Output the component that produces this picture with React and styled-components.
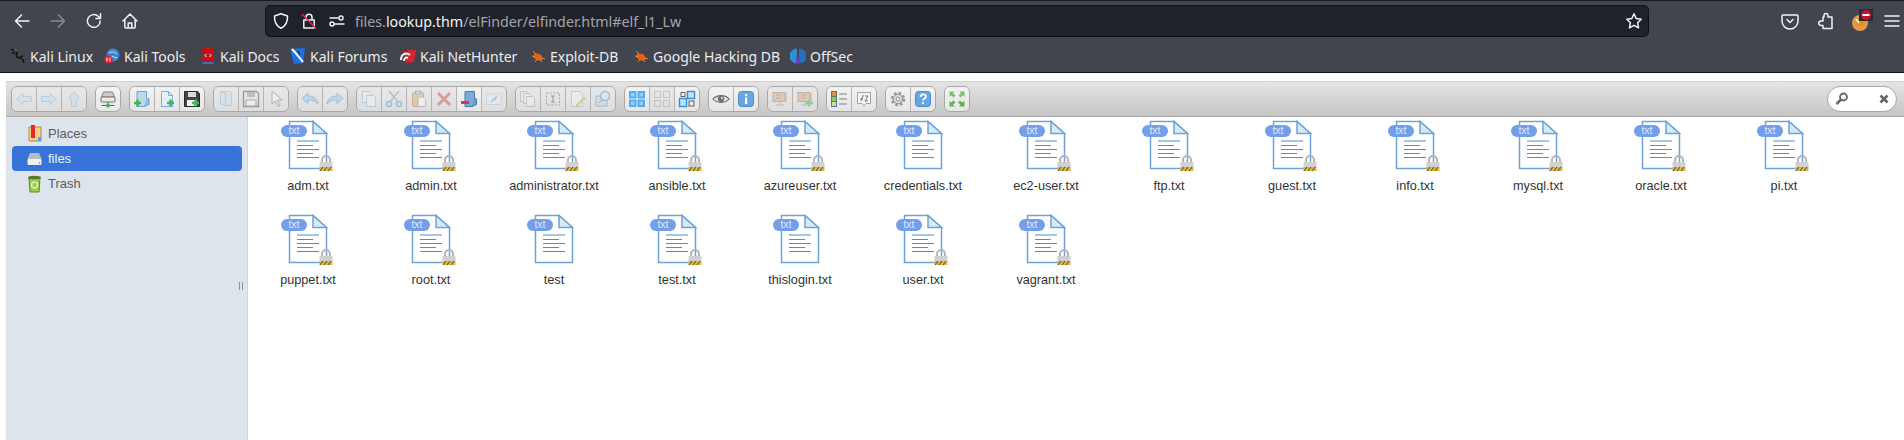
import React from "react";
import styled, { createGlobalStyle } from "styled-components";

const GlobalStyle = createGlobalStyle`
  html, body {
    margin: 0;
    padding: 0;
    background: #fff;
    overflow: hidden;
  }
`;

const Page = styled.div`
  width: 1904px;
  height: 440px;
  display: flex;
  flex-direction: column;
  overflow: hidden;
`;

/* browser chrome */
const Chrome = styled.div`
  background: #42454e;
  border-top: 1px solid #1b1c20;
  border-bottom: 1px solid #121316;
  height: 71px;
  flex: none;
  font-family: "Noto Sans", sans-serif;
`;

const NavRow = styled.div`
  height: 40px;
  display: flex;
  align-items: center;
  padding-left: 4px;
`;

const NavButton = styled.div`
  width: ${(p) => p.$w || 36}px;
  height: 32px;
  flex: none;
  display: flex;
  align-items: center;
  justify-content: center;
  position: relative;
  opacity: ${(p) => (p.$off ? 0.4 : 1)};
`;

const UrlBar = styled.div`
  width: 1384px;
  height: 32px;
  margin-left: 117px;
  box-sizing: border-box;
  flex: none;
  display: flex;
  align-items: center;
  background: #20222b;
  border: 1px solid #101115;
  border-radius: 5px;
  padding-left: 1px;
`;

const UrlIcon = styled.div`
  width: 28px;
  height: 20px;
  flex: none;
  display: flex;
  align-items: center;
  justify-content: center;
`;

const UrlText = styled.div`
  margin-left: 4px;
  font-size: 14.25px;
  color: #a2a4aa;
  white-space: nowrap;
  flex: 1;
  b {
    font-weight: 400;
    color: #f4f4f6;
  }
`;

const RightTools = styled.div`
  margin-left: auto;
  display: flex;
  align-items: center;
`;

const Bookmarks = styled.div`
  height: 30px;
  display: flex;
  align-items: center;
  padding-left: 10px;
`;

const Bookmark = styled.div`
  width: ${(p) => p.$w}px;
  flex: none;
  display: flex;
  align-items: center;
  gap: 4px;
  color: #eceded;
  font-size: 14px;
  white-space: nowrap;
`;

/* elfinder */
const Finder = styled.div`
  flex: 1;
  margin: 8px 0 0 6px;
  display: flex;
  flex-direction: column;
  min-height: 0;
  font-family: "Liberation Sans", Arial, sans-serif;
`;

const Toolbar = styled.div`
  height: 36px;
  flex: none;
  box-sizing: border-box;
  display: flex;
  align-items: center;
  padding: 0 7px 0 5px;
  gap: 8px;
  background: linear-gradient(#e4e4e4, #c5c5c5);
  border-top: 1px solid #d0d0d0;
  border-bottom: 1px solid #a9a9a9;
`;

const Group = styled.div`
  display: flex;
  height: 26px;
  box-sizing: border-box;
  border: 1px solid #a8a8a8;
  border-radius: 6px;
  overflow: hidden;
  flex: none;
`;

const Tool = styled.div`
  width: 25px;
  box-sizing: border-box;
  display: flex;
  align-items: center;
  justify-content: center;
  background: ${(p) => (p.$on ? "linear-gradient(#f3f3f3, #e6e6e6)" : "linear-gradient(#e8e8e8, #dedede)")};
  &:first-child {
    width: 24px;
  }
  & + & {
    border-left: 1px solid #b4b4b4;
  }
  svg {
    opacity: ${(p) => (p.$on ? 0.9 : 0.42)};
  }
`;

const Search = styled.div`
  margin-left: auto;
  width: 70px;
  height: 26px;
  box-sizing: border-box;
  border: 1px solid #a8a8a8;
  border-radius: 13px;
  background: #fff;
  display: flex;
  align-items: center;
  justify-content: space-between;
  padding: 0 7px;
  flex: none;
`;

const Body = styled.div`
  flex: 1;
  display: flex;
  min-height: 0;
`;

const Sidebar = styled.div`
  width: 242px;
  flex: none;
  box-sizing: border-box;
  background: #dde4eb;
  border-right: 1px solid #cfd5dc;
  padding: 4px 5px 0 6px;
  position: relative;
`;

const TreeRow = styled.div`
  height: 25px;
  display: flex;
  align-items: center;
  padding-left: 16px;
  gap: 6px;
  border-radius: 4px;
  font-size: 13px;
  color: ${(p) => (p.$selected ? "#eef3fb" : "#5a5d61")};
  background: ${(p) => (p.$selected ? "#3873d9" : "transparent")};
`;

const Handle = styled.div`
  position: absolute;
  right: 4px;
  top: 165px;
  width: 2px;
  height: 8px;
  border-left: 1px solid #8d9298;
  border-right: 1px solid #8d9298;
`;

const Files = styled.div`
  flex: 1;
  display: grid;
  grid-template-columns: repeat(13, 120px);
  grid-auto-rows: 94px;
  column-gap: 3px;
  padding-top: 3px;
  align-content: start;
  background: #fff;
`;

const FileCell = styled.div`
  display: flex;
  flex-direction: column;
  align-items: center;
`;

const FileIconWrap = styled.div`
  width: 52px;
  height: 52px;
  position: relative;
`;

const TypeBadge = styled.span`
  position: absolute;
  left: -1px;
  top: 5px;
  width: 26px;
  height: 12px;
  border-radius: 6px;
  background: #739eea;
  color: #dfe9fb;
  font-size: 10.5px;
  line-height: 11px;
  text-align: center;
`;

const FileName = styled.div`
  margin-top: 7px;
  font-size: 12.7px;
  line-height: 15px;
  color: #333;
  white-space: nowrap;
`;

const LockSlot = styled.span`
  position: absolute;
  right: 1px;
  bottom: 0;
  display: flex;
`;

/* ---- drawings ---- */
const Svg = ({ s = 18, v = 18, children, ...rest }) => (
  <svg width={s} height={s} viewBox={`0 0 ${v} ${v}`} fill="none" {...rest}>
    {children}
  </svg>
);

const chromeLine = { stroke: "#f2f2f4", strokeWidth: 1.5, strokeLinecap: "round", strokeLinejoin: "round" };

const ChromeIcon = ({ name }) => {
  switch (name) {
    case "back":
      return <Svg><path d="M16 9H2.5M8.5 3 2.5 9l6 6" {...chromeLine} /></Svg>;
    case "forward":
      return <Svg><path d="M2 9h13.5M9.5 3l6 6-6 6" {...chromeLine} /></Svg>;
    case "reload":
      return <Svg><path d="M15.2 8.9a6.4 6.4 0 1 1-2-4.6l2.3 2M15.5 1.8v4.7h-4.6" {...chromeLine} /></Svg>;
    case "home":
      return <Svg><path d="M2 9 9 2l7 7M3.8 7.5V15a1 1 0 0 0 1 1h8.4a1 1 0 0 0 1-1V7.5M7.2 16v-5h3.6v5" {...chromeLine} /></Svg>;
    case "shield":
      return <Svg><path d="M9 1.8 15.5 4c.3 6-1.8 10-6.5 12.2C4.3 14 2.2 10 2.5 4z" {...chromeLine} /></Svg>;
    case "lock":
      return (
        <Svg>
          <path d="M6 7.5V5.200a3 3 0 0 1 6 0V7.5M3.800 8h10.400v8H3.800z" {...chromeLine} />
          <path d="M2 2l14 14.5" stroke="#e0244a" strokeWidth="1.5" />
        </Svg>
      );
    case "perm":
      return (
        <Svg>
          <path d="M2 6h8M7 12h9" {...chromeLine} />
          <circle cx="13" cy="6" r="2" {...chromeLine} />
          <circle cx="4" cy="12" r="2" {...chromeLine} />
        </Svg>
      );
    case "star":
      return <Svg><path d="M9 1.8l2.200 4.700 5 .7-3.600 3.500.9 5.100L9 13.300l-4.500 2.500.9-5.100L1.800 7.200l5-.7z" {...chromeLine} /></Svg>;
    case "pocket":
      return <Svg><path d="M2 3h14a1 1 0 0 1 1 1v5a8 8 0 0 1-16 0V4a1 1 0 0 1 1-1zM6 7.5l3 3 3-3" {...chromeLine} /></Svg>;
    case "puzzle":
      return <Svg><path d="M7 5V3.500a2 2 0 0 1 4 0V5h4v11.500H6v-3H4a2.200 2.200 0 0 1 0-4.500h2V5z" {...chromeLine} /></Svg>;
    case "menu":
      return <Svg><path d="M2 4h14M2 9h14M2 14h14" {...chromeLine} /></Svg>;
    default:
      return null;
  }
};

const Avatar = () => (
  <svg width="24" height="24" viewBox="0 0 24 24">
    <circle cx="10" cy="14" r="8" fill="#e09a50" />
    <path d="M5 13l5-3 6 3-4 4-5-1z" fill="#f08a1d" />
    <path d="M6 10l3 4" stroke="#fff" strokeWidth="1.5" />
    <rect x="9" y="0" width="14" height="12" fill="#2c2d31" />
    <circle cx="16" cy="6" r="5" fill="#c8102e" />
    <rect x="12.5" y="5" width="7" height="2" fill="#fff" />
  </svg>
);

const BookmarkIcon = ({ name }) => {
  switch (name) {
    case "linux":
      return (
        <Svg s={16} v={16}>
          <path d="M1 2c3-1 5 0 6 2 1 3-2 3 0 5 2 1 5 1 6 3l1 3M2 5c2-.5 3 0 3.5 1M10 9l3-1" stroke="#101114" strokeWidth="1.5" />
          <path d="M4 1l3 2" stroke="#d8d8d8" strokeWidth=".6" />
        </Svg>
      );
    case "tools":
      return (
        <Svg s={16} v={16}>
          <circle cx="9" cy="7" r="6.5" fill="#3d86d8" />
          <path d="M5 5c3-2 6-1 8 1M5 9c3-1 5 0 8 1" stroke="#cfe4fa" strokeWidth="1" />
          <circle cx="4.5" cy="11.5" r="4.200" fill="#d9232d" />
          <path d="M3 9.5v4M6 9.5v4" stroke="#fff" strokeWidth="1" />
        </Svg>
      );
    case "docs":
      return (
        <Svg s={16} v={16}>
          <rect x="2.5" y="0" width="11" height="15" rx="1" fill="#c90f16" />
          <rect x="2.5" y="14" width="11" height="2" fill="#3d6fb4" />
          <path d="M6.5 6 5 7.5 6.5 9M9.5 6 11 7.5 9.5 9" stroke="#fff" strokeWidth="1" />
        </Svg>
      );
    case "forums":
      return (
        <Svg s={16} v={16}>
          <path d="M0 1l15-1-2 15-9 1z" fill="#1f6fe0" />
          <path d="M2 1c3 3 6 7 11 13" stroke="#fff" strokeWidth="2" />
          <path d="M8 3l2 4" stroke="#1a1a1a" strokeWidth="1" />
        </Svg>
      );
    case "hunter":
      return (
        <Svg s={16} v={16}>
          <path d="M4 2l12 0-2 12-8 1z" fill="#d7262e" />
          <path d="M1 12c0-6 5-8 9-5M4 13c0-3 2-4 4-3" stroke="#f4f4f4" strokeWidth="2" />
          <path d="M5 1l2 3" stroke="#222" strokeWidth="1" />
        </Svg>
      );
    case "exploit":
      return (
        <Svg s={16} v={16}>
          <ellipse cx="8" cy="9" rx="5" ry="3.2" fill="#e6601a" transform="rotate(25 8 9)" />
          <path d="M3 3l3 3M2 8l3 1M5 14l2-3M12 14l-2-3M15 11l-3-1" stroke="#e98a3c" strokeWidth="1" />
        </Svg>
      );
    case "offsec":
      return (
        <Svg s={16} v={16}>
          <path d="M7 .5a7.5 7.5 0 0 0 0 15z" fill="#2b8fd6" />
          <path d="M9 .5a7.5 7.5 0 0 1 0 15z" fill="#2a6fc2" />
          <path d="M7 9v6.5M9 9v6.5" stroke="#6b3bc7" strokeWidth="2" />
        </Svg>
      );
    default:
      return null;
  }
};

const blue = "#7fb2dc";
const blueFill = "#c4dcef";
const plus = (x, y) => (
  <path d={`M${x} ${y - 3.5}v7M${x - 3.5} ${y}h7`} stroke="#2fae47" strokeWidth="2.5" />
);

const ToolIcon = ({ name }) => {
  switch (name) {
    case "back":
      return <Svg><path d="M1.5 9 8 3.5V6.500h8.500v5H8v3z" fill={blueFill} stroke={blue} /></Svg>;
    case "forward":
      return <Svg><path d="M16.5 9 10 3.5V6.500H1.500v5H10v3z" fill={blueFill} stroke={blue} /></Svg>;
    case "up":
      return <Svg><path d="M9 1.5 14.5 8h-3v8.500h-5V8h-3z" fill={blueFill} stroke={blue} /></Svg>;
    case "netmount":
      return (
        <Svg>
          <path d="M4.5 2h9l2 5h-13z" fill="#c8c8c8" stroke="#777" />
          <rect x="2" y="7" width="14" height="5" rx="1" fill="#e8e8e8" stroke="#666" />
          <path d="M9 12v3M2.5 15.5h13" stroke="#555" />
          <circle cx="9" cy="15.5" r="2" fill="#2fae47" />
        </Svg>
      );
    case "mkdir":
      return (
        <Svg>
          <path d="M4 1.5h9.500v13l-2.500 2H4z" fill="#b9d5ec" stroke="#5a9bd0" />
          <path d="M13.5 8l2.500 1v5.500l-5 2" fill="#8fbbe0" stroke="#5a9bd0" />
          {plus(4.5, 13)}
        </Svg>
      );
    case "mkfile":
      return (
        <Svg>
          <path d="M3.5 1.5h7l4 4v11h-11z" fill="#e4f0fa" stroke="#6ba7d8" />
          <path d="M10.5 1.5v4h4" stroke="#6ba7d8" />
          {plus(12.5, 13)}
        </Svg>
      );
    case "upload":
      return (
        <Svg>
          <path d="M1.5 1.5h13l2 2v13h-15z" fill="#333" stroke="#111" />
          <rect x="5" y="2" width="8" height="5" fill="#d8d8d8" />
          <rect x="4" y="10" width="10" height="6" fill="#f2f2f2" />
          {plus(12.5, 13)}
        </Svg>
      );
    case "open":
      return (
        <Svg>
          <path d="M3.5 1.5h9l2 1v13h-6l-5-1.500z" fill={blueFill} stroke={blue} />
          <path d="M8.5 3v12.500M3.500 1.500l5 1.500" stroke={blue} />
        </Svg>
      );
    case "save":
      return (
        <Svg>
          <path d="M1.5 1.5h13l2 2v13h-15z" fill="#e8e8e8" stroke="#333" strokeWidth="1.3" />
          <rect x="5" y="2" width="8" height="5" fill="#888" />
          <rect x="4" y="10" width="10" height="6" fill="#fff" stroke="#555" />
        </Svg>
      );
    case "cursor":
      return <Svg><path d="M5 1v13l3.500-3 2.500 5.500 2-1L10.500 10H15z" fill="#fff" stroke="#666" /></Svg>;
    case "undo":
      return <Svg><path d="M1 8.5 7 3v3c5 0 9 2 10 8-2-3-5-4-10-4v3.500z" fill="#8fc0e8" stroke="#3c8ccc" /></Svg>;
    case "redo":
      return <Svg><path d="M17 8.5 11 3v3C6 6 2 8 1 14c2-3 5-4 10-4v3.500z" fill="#8fc0e8" stroke="#3c8ccc" /></Svg>;
    case "copy":
      return (
        <Svg>
          <path d="M2.5 1.5h7l2 2v9h-9z" fill="#eef5fb" stroke="#88a8c4" />
          <path d="M6.5 5.5h7l2 2v9h-9z" fill="#eef5fb" stroke="#88a8c4" />
        </Svg>
      );
    case "cut":
      return (
        <Svg>
          <path d="M4 1l9 11M14 1 5 12" stroke="#7d8d99" strokeWidth="1.5" />
          <circle cx="4" cy="14" r="2.5" stroke="#3d8fd0" strokeWidth="1.6" />
          <circle cx="14" cy="14" r="2.5" stroke="#3d8fd0" strokeWidth="1.6" />
        </Svg>
      );
    case "paste":
      return (
        <Svg>
          <rect x="2.5" y="2.5" width="11" height="14" rx="1" fill="#d9a766" stroke="#9c6b33" />
          <rect x="5.5" y="1" width="5" height="3" fill="#bbb" stroke="#777" />
          <path d="M8 7h5l2.500 2.500v7H8z" fill="#fff" stroke="#888" />
        </Svg>
      );
    case "rm":
      return <Svg><path d="M3 3l12 12M15 3 3 15" stroke="#cc3a2a" strokeWidth="3" /></Svg>;
    case "empty":
      return (
        <Svg>
          <path d="M5 1.5h9.500v13l-2.500 2H5z" fill="#6fa6d6" stroke="#356fa8" />
          <path d="M14.5 8l2 1v5.500l-4.500 2" fill="#5b93c6" stroke="#356fa8" />
          <rect x="1" y="11" width="8" height="3" fill="#d8262c" />
        </Svg>
      );
    case "hide":
      return (
        <Svg>
          <rect x="1.5" y="3.5" width="15" height="11" fill="#e6f0f9" stroke="#a8c6e0" />
          <path d="M1.5 3.5h15v2h-15z" fill="#cfe1f0" />
          <path d="M6 12l6-6M9 8l2 2" stroke="#5a9bd0" strokeWidth="1.5" />
        </Svg>
      );
    case "duplicate":
      return (
        <Svg>
          <path d="M1.5 1.5h6l2 2v8h-8z" fill="#eef4fa" stroke="#8a9aa8" />
          <path d="M4.5 3.5h6l2 2v8h-8z" fill="#eef4fa" stroke="#8a9aa8" />
          <path d="M7.5 6.5h6l2 2v8h-8z" fill="#eef4fa" stroke="#8a9aa8" />
        </Svg>
      );
    case "rename":
      return (
        <Svg>
          <rect x="2.5" y="3" width="13" height="12" stroke="#555" strokeDasharray="2 1.5" />
          <path d="M7 6h4M7 12h4M9 6v6" stroke="#333" />
        </Svg>
      );
    case "edit":
      return (
        <Svg>
          <path d="M2.5 1.5h8l3 3v12h-11z" fill="#f4f6f8" stroke="#9aa6b0" />
          <path d="M7 15l8-8 1.500 1.500-8 8z" fill="#e8b83a" stroke="#a07a20" strokeWidth=".6" />
        </Svg>
      );
    case "resize":
      return (
        <Svg>
          <rect x="2" y="6" width="11" height="10" fill="#bcd5ea" stroke="#4a86ba" />
          <circle cx="11" cy="6" r="4.5" fill="#d4e6f4" stroke="#3a8bc8" strokeWidth="1.5" />
          <path d="M5 13l4-4" stroke="#35628c" />
        </Svg>
      );
    case "grid":
      return (
        <Svg>
          <rect x="1" y="1" width="7.5" height="7.5" fill="#42a5f5" />
          <rect x="9.5" y="1" width="7.5" height="7.5" fill="#42a5f5" />
          <rect x="1" y="9.5" width="7.5" height="7.5" fill="#42a5f5" />
          <rect x="9.5" y="9.5" width="7.5" height="7.5" fill="#42a5f5" />
          <rect x="3" y="3" width="3.5" height="3.5" fill="#8fcbf8" />
          <rect x="11.5" y="3" width="3.5" height="3.5" fill="#8fcbf8" />
          <rect x="3" y="11.5" width="3.5" height="3.5" fill="#8fcbf8" />
          <rect x="11.5" y="11.5" width="3.5" height="3.5" fill="#8fcbf8" />
        </Svg>
      );
    case "selnone":
      return (
        <Svg>
          <rect x="1.5" y="1.5" width="6" height="6" stroke="#999" />
          <rect x="10.5" y="1.5" width="6" height="6" stroke="#999" />
          <rect x="1.5" y="10.5" width="6" height="6" stroke="#999" />
          <rect x="10.5" y="10.5" width="6" height="6" stroke="#999" />
        </Svg>
      );
    case "selinvert":
      return (
        <Svg>
          <rect x="1.5" y="8.5" width="7" height="8" fill="#bfe0fa" stroke="#1f84d8" strokeWidth="1.4" />
          <rect x="9.5" y="1.5" width="7" height="7" fill="#bfe0fa" stroke="#1f84d8" strokeWidth="1.4" />
          <rect x="3" y="2.5" width="4" height="4" stroke="#555" />
          <rect x="11" y="11" width="5" height="5" stroke="#555" />
        </Svg>
      );
    case "eye":
      return (
        <Svg s={18} v={20}>
          <path d="M1 10c4-5 14-5 18 0-4 5-14 5-18 0z" fill="#ddd" stroke="#555" strokeWidth="1.2" />
          <circle cx="10" cy="10" r="3.5" fill="#666" />
          <circle cx="11" cy="9" r="1.2" fill="#ddd" />
        </Svg>
      );
    case "info":
      return (
        <Svg>
          <rect x="1.5" y="1.5" width="15" height="15" rx="3" fill="#5a9fe0" stroke="#3d7fc0" />
          <rect x="8" y="4" width="2.2" height="2.2" fill="#fff" />
          <rect x="8" y="7.5" width="2.2" height="6.5" fill="#fff" />
        </Svg>
      );
    case "extract":
    case "archive":
      return (
        <Svg>
          <rect x="2" y="2.5" width="12" height="9" fill="#d6a878" stroke="#8a6a46" />
          <path d="M5 5h5M5 8h5M15 3v8" stroke="#8a6a46" />
          <path d="M5 15h8M9 11.5v3.5" stroke="#888" />
          {name === "archive" ? plus(13.5, 13) : null}
        </Svg>
      );
    case "list":
      return (
        <Svg>
          <rect x="1.5" y="1.5" width="5" height="5" fill="#d98a3c" stroke="#7a5a30" />
          <rect x="1.5" y="6.5" width="5" height="5" fill="#7cc36a" stroke="#3d7a40" />
          <rect x="1.5" y="11.5" width="5" height="5" fill="#e8d66a" stroke="#2f6fb5" />
          <path d="M9 4h8M9 9h8M9 14h8" stroke="#777" />
        </Svg>
      );
    case "sort":
      return (
        <Svg>
          <path d="M2.5 2.5h13v11H11l-2 2.500-2-2.500H2.500z" fill="#f8f8f8" stroke="#999" />
          <path d="M8.5 5 6 11M5 9h3M10 6h3l-3 5h3" stroke="#666" />
        </Svg>
      );
    case "prefs":
      return (
        <Svg>
          <circle cx="9" cy="9" r="6" fill="#dcdcdc" stroke="#8a8a8a" strokeWidth="2.4" strokeDasharray="2.5 2.2" />
          <circle cx="9" cy="9" r="4.6" stroke="#8a8a8a" />
          <circle cx="9" cy="9" r="2" fill="#f4f4f4" stroke="#888" />
        </Svg>
      );
    case "help":
      return (
        <Svg>
          <rect x="1.5" y="1.5" width="15" height="15" rx="3" fill="#5a9fe0" stroke="#3d7fc0" />
          <path d="M6.5 7c0-3.500 5.500-3.500 5.500-.5 0 2-3 2-3 4" stroke="#fff" strokeWidth="1.7" />
          <rect x="8" y="12" width="2" height="2" fill="#fff" />
        </Svg>
      );
    case "full":
      return (
        <Svg>
          <path d="M1.500 1.500h5L5 3.500l2.500 2-2 2L3.500 5.500l-2 1.500zM16.500 1.500v5.500l-2-1.500-2 2-2-2 2.500-2-1.500-2z" fill="#6dbb5a" />
          <path d="M1.500 16.500V11l2 1.500 2-2 2 2-2.500 2 1.500 2zM16.500 16.500h-5.500l1.500-2-2.500-2 2-2 2 2 2.500-1.500z" fill="#5aa84a" />
        </Svg>
      );
    default:
      return null;
  }
};

const LockIcon = () => (
  <svg width="14" height="17" viewBox="0 0 14 17">
    <path d="M3 8V5a4 4 0 0 1 8 0v3" fill="none" stroke="#b5b5b5" strokeWidth="2" />
    <rect x="0.5" y="7" width="13" height="6" fill="#d0d0d0" />
    <rect x="0.5" y="12" width="13" height="4" fill="#e5b93c" />
    <path d="M1 16l3-4M5 16l3-4M9 16l3-4" stroke="#5a5a4a" strokeWidth="1.1" />
  </svg>
);

const DocIcon = () => (
  <svg width="52" height="52" viewBox="1 0 52 52" fill="none">
    <path d="M8.500 1.500H32L45.500 13.500V48.500H8.500Z" fill="#fff" stroke="#6fa3d6" strokeWidth="1.5" />
    <path d="M32 1.500V13.500H45.500Z" fill="#d6ebf9" stroke="#6fa3d6" strokeWidth="1.5" />
    <path d="M16 21h22M16 25.500h16M16 29.500h22M16 33.500h16M16 37.500h22" stroke="#4d8ecb" strokeWidth="1.2" />
  </svg>
);

const FileItem = ({ name, locked = true }) => (
  <FileCell>
    <FileIconWrap>
      <DocIcon />
      <TypeBadge>txt</TypeBadge>
      {locked ? <LockSlot><LockIcon /></LockSlot> : null}
    </FileIconWrap>
    <FileName>{name}</FileName>
  </FileCell>
);

const toolGroups = [
  [["back"], ["forward"], ["up"]],
  [["netmount", 1]],
  [["mkdir", 1], ["mkfile", 1], ["upload", 1]],
  [["open"], ["save"], ["cursor"]],
  [["undo"], ["redo"]],
  [["copy"], ["cut"], ["paste"], ["rm"], ["empty", 1], ["hide"]],
  [["duplicate"], ["rename"], ["edit"], ["resize"]],
  [["grid", 1], ["selnone"], ["selinvert", 1]],
  [["eye", 1], ["info", 1]],
  [["extract"], ["archive"]],
  [["list", 1], ["sort", 1]],
  [["prefs", 1], ["help", 1]],
  [["full", 1]],
];

const bookmarks = [
  ["linux", "Kali Linux", 94],
  ["tools", "Kali Tools", 96],
  ["docs", "Kali Docs", 90],
  ["forums", "Kali Forums", 110],
  ["hunter", "Kali NetHunter", 130],
  ["exploit", "Exploit-DB", 103],
  ["exploit", "Google Hacking DB", 157],
  ["offsec", "OffSec", 70],
];

const files = [
  "adm.txt", "admin.txt", "administrator.txt", "ansible.txt", "azureuser.txt", "credentials.txt",
  "ec2-user.txt", "ftp.txt", "guest.txt", "info.txt", "mysql.txt", "oracle.txt", "pi.txt",
  "puppet.txt", "root.txt", "test", "test.txt", "thislogin.txt", "user.txt", "vagrant.txt",
];
const unlocked = ["credentials.txt", "test", "thislogin.txt"];

export default function App() {
  return (
    <Page>
      <GlobalStyle />
      <Chrome>
        <NavRow>
          <NavButton><ChromeIcon name="back" /></NavButton>
          <NavButton $off><ChromeIcon name="forward" /></NavButton>
          <NavButton><ChromeIcon name="reload" /></NavButton>
          <NavButton><ChromeIcon name="home" /></NavButton>
          <UrlBar>
            <UrlIcon><ChromeIcon name="shield" /></UrlIcon>
            <UrlIcon><ChromeIcon name="lock" /></UrlIcon>
            <UrlIcon><ChromeIcon name="perm" /></UrlIcon>
            <UrlText>files.<b>lookup.thm</b>/elFinder/elfinder.html#elf_l1_Lw</UrlText>
            <UrlIcon><ChromeIcon name="star" /></UrlIcon>
          </UrlBar>
          <RightTools>
            <NavButton><ChromeIcon name="pocket" /></NavButton>
            <NavButton><ChromeIcon name="puzzle" /></NavButton>
            <NavButton><Avatar /></NavButton>
            <NavButton $w={24}><ChromeIcon name="menu" /></NavButton>
          </RightTools>
        </NavRow>
        <Bookmarks>
          {bookmarks.map(([icon, label, w]) => (
            <Bookmark key={label} $w={w}>
              <BookmarkIcon name={icon} />
              {label}
            </Bookmark>
          ))}
        </Bookmarks>
      </Chrome>
      <Finder>
        <Toolbar>
          {toolGroups.map((group, i) => (
            <Group key={i}>
              {group.map(([name, on]) => (
                <Tool key={name} $on={on}><ToolIcon name={name} /></Tool>
              ))}
            </Group>
          ))}
          <Search>
            <svg width="14" height="14" viewBox="0 0 14 14" fill="none">
              <circle cx="8.5" cy="5" r="3.5" stroke="#666" strokeWidth="1.8" />
              <path d="M6 7.5 1.500 12" stroke="#666" strokeWidth="2.5" />
            </svg>
            <svg width="10" height="10" viewBox="0 0 10 10">
              <path d="M1.500 1.500l7 7M8.500 1.500l-7 7" stroke="#666" strokeWidth="2.6" />
            </svg>
          </Search>
        </Toolbar>
        <Body>
          <Sidebar>
            <TreeRow>
              <svg width="14" height="18" viewBox="0 0 14 18">
                <path d="M1 2h12v14H1z" fill="#f4d28a" stroke="#b88a3c" />
                <rect x="3" y="0" width="4" height="13" fill="#e02b2b" />
                <rect x="10" y="12" width="3" height="4" fill="#4ca6e0" />
              </svg>
              Places
            </TreeRow>
            <TreeRow $selected>
              <svg width="15" height="14" viewBox="0 0 15 14" style={{ marginLeft: -1 }}>
                <path d="M3 1h9l2.500 6H.5z" fill="#b9bcc2" />
                <rect x="0.5" y="7" width="14" height="6" rx="1" fill="#f0f0f0" />
                <circle cx="12.5" cy="11" r="0.8" fill="#3db04a" />
              </svg>
              files
            </TreeRow>
            <TreeRow>
              <svg width="15" height="18" viewBox="0 0 15 18" style={{ marginLeft: -1 }}>
                <path d="M2 3h11l-1 14H3z" fill="#9ccb4a" stroke="#5c8a2a" />
                <ellipse cx="7.5" cy="2.5" rx="6.5" ry="1.8" fill="#4f7a2a" />
                <circle cx="7.5" cy="10" r="3" fill="none" stroke="#dcedb8" strokeWidth="1.5" />
              </svg>
              Trash
            </TreeRow>
            <Handle />
          </Sidebar>
          <Files>
            {files.map((f) => (
              <FileItem key={f} name={f} locked={!unlocked.includes(f)} />
            ))}
          </Files>
        </Body>
      </Finder>
    </Page>
  );
}
